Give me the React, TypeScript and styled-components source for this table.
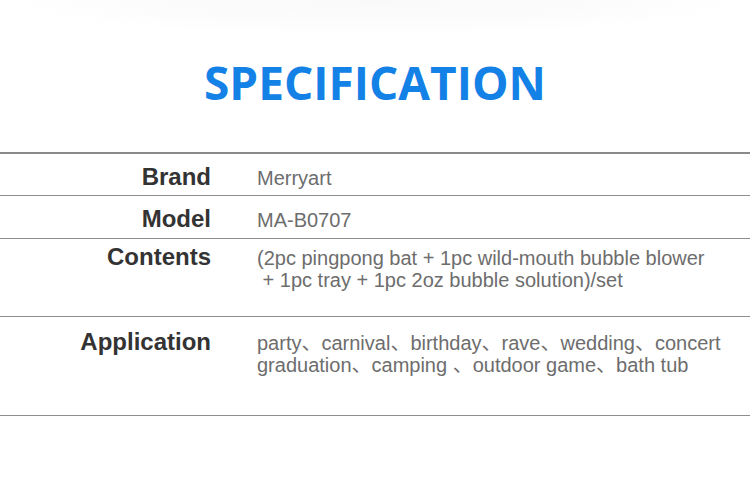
import React from "react";
import styled, { createGlobalStyle } from "styled-components";

const GlobalStyle = createGlobalStyle`
  html, body {
    margin: 0;
    padding: 0;
    background: #ffffff;
  }
  body {
    font-family: "Liberation Sans", Arial, "Noto Sans CJK SC", sans-serif;
  }
`;

const Page = styled.div`
  width: 750px;
  height: 480px;
  background: #ffffff;
  overflow: hidden;
`;

const Header = styled.header`
  height: 152px;
  box-sizing: border-box;
  padding-top: 59px;
  background: radial-gradient(ellipse 50% 36px at 50% 0, #f9f9f9 0%, #fcfcfc 60%, #ffffff 100%);
`;

const Title = styled.h1`
  margin: 0;
  text-align: center;
  font-family: "Open Sans", "Noto Sans", sans-serif;
  font-weight: 700;
  font-size: 46px;
  line-height: 46px;
  color: #1481e6;
  letter-spacing: 0;
`;

const Table = styled.div`
  border-top: 2px solid #8a8a8a;
`;

const Row = styled.div<{ $height: number; $padTop: number }>`
  display: grid;
  grid-template-columns: 211px 1fr;
  column-gap: 46px;
  align-items: baseline;
  box-sizing: border-box;
  height: ${(p) => p.$height}px;
  padding-top: ${(p) => p.$padTop}px;
  border-bottom: 1px solid #8e8e8e;
`;

const Label = styled.div`
  text-align: right;
  font-family: "Liberation Sans", Arial, sans-serif;
  font-weight: 700;
  font-size: 24px;
  line-height: 22px;
  color: #333333;
`;

const Value = styled.div`
  font-family: "Liberation Sans", Arial, "Noto Sans CJK SC", sans-serif;
  font-size: 20px;
  line-height: 22px;
  color: #6d6d6d;
  white-space: pre;
`;

type Spec = { label: string; lines: string[]; height: number; padTop: number };

const specs: Spec[] = [
  { label: "Brand", lines: ["Merryart"], height: 42, padTop: 12 },
  { label: "Model", lines: ["MA-B0707"], height: 43, padTop: 12 },
  {
    label: "Contents",
    lines: [
      "(2pc pingpong bat + 1pc wild-mouth bubble blower",
      " + 1pc tray + 1pc 2oz bubble solution)/set",
    ],
    height: 78,
    padTop: 7,
  },
  {
    label: "Application",
    lines: [
      "party、carnival、birthday、rave、wedding、concert",
      "graduation、camping 、outdoor game、bath tub",
    ],
    height: 99,
    padTop: 14,
  },
];

export default function App() {
  return (
    <Page>
      <GlobalStyle />
      <Header>
        <Title>SPECIFICATION</Title>
      </Header>
      <Table>
        {specs.map((s) => (
          <Row key={s.label} $height={s.height} $padTop={s.padTop}>
            <Label>{s.label}</Label>
            <Value>
              {s.lines.map((l, i) => (
                <React.Fragment key={i}>
                  {i > 0 && "\n"}
                  {l}
                </React.Fragment>
              ))}
            </Value>
          </Row>
        ))}
      </Table>
    </Page>
  );
}
